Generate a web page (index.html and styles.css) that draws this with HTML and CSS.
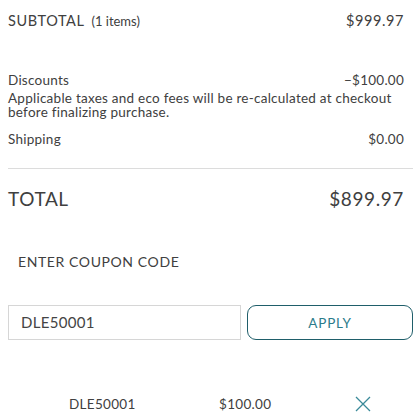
FILE: index.html
```html
<!DOCTYPE html>
<html>
<head>
<meta charset="utf-8">
<link rel="stylesheet" href="styles.css">
</head>
<body>
<div class="summary">
  <div class="row subtotal">
    <span class="label">SUBTOTAL <span class="count">(1 items)</span></span>
    <span class="amount">$999.97</span>
  </div>
  <div class="row discounts">
    <span>Discounts</span>
    <span>−$100.00</span>
  </div>
  <p class="note">Applicable taxes and eco fees will be re-calculated at checkout before finalizing purchase.</p>
  <div class="row shipping">
    <span>Shipping</span>
    <span>$0.00</span>
  </div>
  <div class="divider"></div>
  <div class="row total">
    <span>TOTAL</span>
    <span>$899.97</span>
  </div>
  <div class="coupon-title">ENTER COUPON CODE</div>
  <div class="coupon-form">
    <div class="coupon-input">DLE50001</div>
    <button class="apply">APPLY</button>
  </div>
  <div class="applied">
    <span class="code">DLE50001</span>
    <span class="value">$100.00</span>
    <svg class="remove" width="16" height="16" viewBox="0 0 16 16"><path d="M1 1L15 15M15 1L1 15" stroke="#3a8a99" stroke-width="1.3" fill="none"/></svg>
  </div>
</div>
</body>
</html>
```
FILE: styles.css
```css
html, body { margin: 0; padding: 0; background: #fff; }
body { font-family: Lato, "Noto Sans", sans-serif; color: #404040; }
.summary { padding: 0 13px 0 8px; width: 396px; }
.row { display: flex; justify-content: space-between; align-items: baseline; }
.subtotal { padding-top: 12px; font-size: 14.5px; letter-spacing: 0.6px; }
.subtotal .count { font-size: 13px; letter-spacing: 0; margin-left: 3px; }
.discounts { margin-top: 43px; font-size: 13.5px; letter-spacing: 0.25px; }
.note { margin: 3px 0 0; font-size: 13.5px; line-height: 14px; letter-spacing: 0.25px; }
.shipping { margin-top: 12px; font-size: 13.5px; letter-spacing: 0.25px; }
.divider { height: 1px; background: #dcdcdc; margin: 21px -9px 0 0; }
.total { margin-top: 18px; font-size: 19px; letter-spacing: 0.6px; }
.coupon-title { margin: 43px 0 0 10px; font-size: 14px; letter-spacing: 0.6px; }
.coupon-form { display: flex; gap: 6px; margin-top: 35px; margin-right: -9px; }
.coupon-input { width: 219px; height: 33px; border: 1px solid #d6d6d6; padding-left: 12px; font-size: 15px; line-height: 33px; color: #444; letter-spacing: 0.3px; }
.apply { flex: 1; height: 35px; border: 1px solid #1f5e6a; border-radius: 9px; background: #fff; color: #2b7c8b; font-family: inherit; font-size: 13.5px; letter-spacing: 0.8px; }
.applied { display: flex; align-items: center; margin-top: 56px; font-size: 13.5px; letter-spacing: 0.3px; }
.applied .code { margin-left: 61px; width: 150px; }
.applied .value { width: 136px; }
```
